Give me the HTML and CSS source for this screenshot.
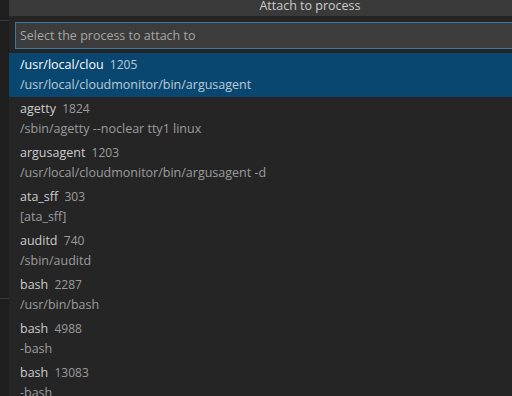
FILE: index.html
```html
<!DOCTYPE html>
<html lang="en">
<head>
  <meta charset="UTF-8" />
  <title>Attach to process</title>
  <link rel="stylesheet" href="styles.css">
</head>
<body>
  <div class="editor-edge">
    <div class="edge-top"></div>
    <div class="edge-mid"></div>
    <div class="edge-bottom"></div>
  </div>

  <div class="quick-input">
    <div class="quick-title">Attach to process</div>
    <div class="quick-filter">
      <input type="text" placeholder="Select the process to attach to" />
    </div>

    <ul class="quick-list">
      <li class="row selected">
        <div class="label">/usr/local/clou <span class="desc">1205</span></div>
        <div class="detail">/usr/local/cloudmonitor/bin/argusagent</div>
      </li>
      <li class="row">
        <div class="label">agetty <span class="desc">1824</span></div>
        <div class="detail">/sbin/agetty --noclear tty1 linux</div>
      </li>
      <li class="row">
        <div class="label">argusagent <span class="desc">1203</span></div>
        <div class="detail">/usr/local/cloudmonitor/bin/argusagent -d</div>
      </li>
      <li class="row">
        <div class="label">ata_sff <span class="desc">303</span></div>
        <div class="detail">[ata_sff]</div>
      </li>
      <li class="row">
        <div class="label">auditd <span class="desc">740</span></div>
        <div class="detail">/sbin/auditd</div>
      </li>
      <li class="row">
        <div class="label">bash <span class="desc">2287</span></div>
        <div class="detail">/usr/bin/bash</div>
      </li>
      <li class="row">
        <div class="label">bash <span class="desc">4988</span></div>
        <div class="detail">-bash</div>
      </li>
      <li class="row">
        <div class="label">bash <span class="desc">13083</span></div>
        <div class="detail">-bash</div>
      </li>
    </ul>
  </div>
</body>
</html>
```

FILE: styles.css
```css
html, body {
  height: 100%;
}

body {
  margin: 0;
  display: flex;
  overflow: hidden;
  background-color: #1e1e1e;
  font-family: 'Open Sans', sans-serif;
  font-size: 12.5px;
  color: #cccccc;
}

.editor-edge {
  width: 9px;
  flex-shrink: 0;
  background-color: #1e1e1e;
}

.edge-top {
  height: 20px;
}

.edge-mid {
  height: 277px;
  border-top: 1px solid #3a3a3a;
}

.edge-bottom {
  border-top: 1px solid #3a3a3a;
}

.quick-input {
  width: 602px;
  flex-shrink: 0;
  background-color: #252526;
}

.quick-title {
  height: 16px;
  line-height: 11px;
  text-align: center;
  background-color: #3a3a3b;
  color: #cccccc;
  overflow: hidden;
}

.quick-filter {
  padding: 6px 6px 4px 6px;
}

.quick-filter input {
  display: block;
  width: 100%;
  height: 27px;
  box-sizing: border-box;
  margin: 0;
  padding: 0 4px;
  font-family: inherit;
  font-size: 12.5px;
  color: #cccccc;
  background-color: #3c3c3c;
  border: 1px solid #3d77a3;
  outline: none;
}

.quick-filter input::placeholder {
  color: #a6a6a6;
}

.quick-list {
  list-style: none;
  margin: 0;
  padding: 0;
}

.row {
  height: 44px;
  box-sizing: border-box;
  padding: 2px 11px 0 11px;
  white-space: nowrap;
}

.row.selected {
  background-color: #094771;
  color: #ffffff;
}

.label {
  line-height: 20px;
}

.desc {
  margin-left: 3px;
  font-size: 12px;
  opacity: 0.7;
}

.detail {
  line-height: 20px;
  opacity: 0.7;
}
```
